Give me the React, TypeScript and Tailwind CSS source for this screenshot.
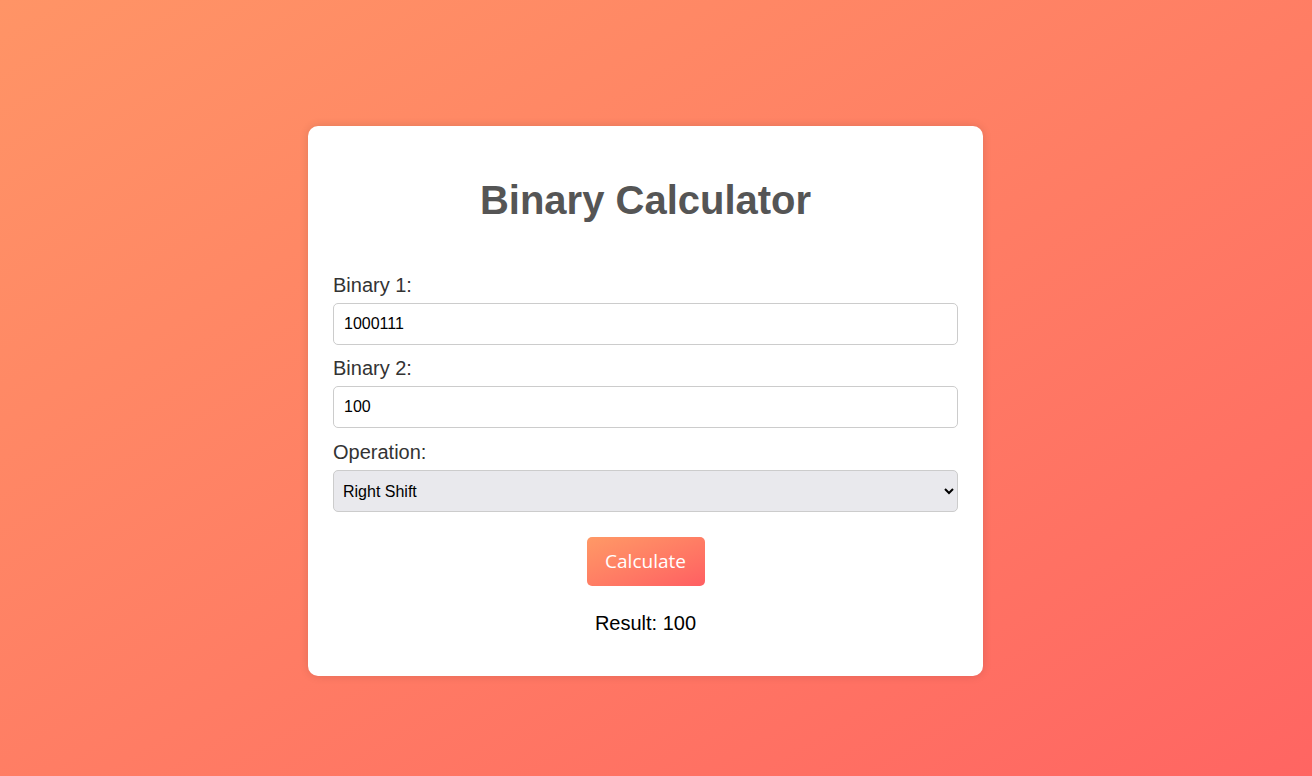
import { useState } from "react";

// Simple binary calculator card on a warm gradient backdrop.

const OPS = [
  "Addition",
  "Subtraction",
  "Multiplication",
  "Division",
  "AND",
  "OR",
  "XOR",
  "Left Shift",
  "Right Shift",
];

export default function App() {
  const [a, setA] = useState("1000111");
  const [b, setB] = useState("100");
  const [op, setOp] = useState("Right Shift");

  return (
    <div className="min-h-screen w-full bg-gradient-to-br from-[#ff9466] to-[#ff6562] pt-[126px] font-['Liberation_Sans',Arial,sans-serif]">
      <div className="ml-[308px] w-[675px] rounded-[10px] bg-white px-[25px] pb-[41px] pt-[51px] shadow-[0_0_10px_rgba(0,0,0,0.12)]">
        <h1 className="text-center text-[40px] font-bold leading-[46px] text-[#555]">
          Binary Calculator
        </h1>

        <div className="mt-[51px] flex flex-col">
          <label className="mb-[6px] text-[20px] leading-[23px] text-[#333]">
            Binary 1:
          </label>
          <input
            value={a}
            onChange={(e) => setA(e.target.value)}
            className="mb-[12px] h-[42px] w-full rounded-[5px] border border-[#ccc] px-[10px] text-[16px] text-black outline-none"
          />

          <label className="mb-[6px] text-[20px] leading-[23px] text-[#333]">
            Binary 2:
          </label>
          <input
            value={b}
            onChange={(e) => setB(e.target.value)}
            className="mb-[13px] h-[42px] w-full rounded-[5px] border border-[#ccc] px-[10px] text-[16px] text-black outline-none"
          />

          <label className="mb-[6px] text-[20px] leading-[23px] text-[#333]">
            Operation:
          </label>
          <select
            value={op}
            onChange={(e) => setOp(e.target.value)}
            className="h-[42px] w-full rounded-[5px] border border-[#ccc] bg-[#e9e9ed] px-[5px] text-[16px] text-black outline-none"
          >
            {OPS.map((o) => (
              <option key={o}>{o}</option>
            ))}
          </select>

          <button className="mx-auto mt-[25px] h-[49px] w-[118px] rounded-[5px] bg-gradient-to-br from-[#ff9966] to-[#ff5e62] font-['Open_Sans',sans-serif] text-[19px] text-white">
            Calculate
          </button>

          <p className="mt-[26px] text-center text-[20px] leading-[23px] text-black">
            Result: 100
          </p>
        </div>
      </div>
    </div>
  );
}
